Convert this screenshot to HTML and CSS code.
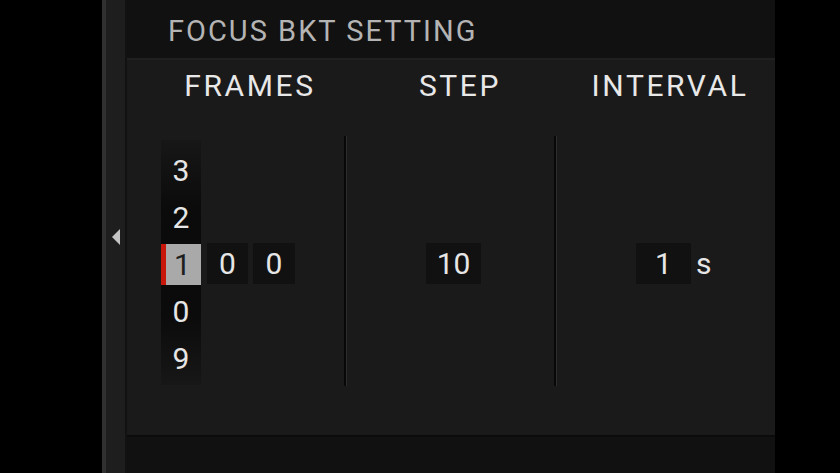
FILE: index.html
```html
<!DOCTYPE html>
<html>
<head>
<meta charset="utf-8">
<link rel="stylesheet" href="styles.css">
</head>
<body>
<div class="screen">
  <div class="gutter"></div>
  <div class="strip">
    <svg class="arrow" width="10" height="16" viewBox="0 0 10 16"><polygon points="9,0 9,16 1,8" fill="#c4c4c4"/></svg>
  </div>
  <div class="panel">
    <div class="head"><span class="title">FOCUS BKT SETTING</span></div>
    <div class="body">
      <div class="labels">
        <div class="label">FRAMES</div>
        <div class="label">STEP</div>
        <div class="label">INTERVAL</div>
      </div>
      <div class="content">
        <div class="col col-frames">
          <div class="wheel">
            <div class="wi">3</div>
            <div class="wi">2</div>
            <div class="wi"><span class="sel">1</span></div>
            <div class="wi">0</div>
            <div class="wi">9</div>
          </div>
          <div class="cell c1">0</div>
          <div class="cell c2">0</div>
        </div>
        <div class="divider"></div>
        <div class="col col-val">
          <div class="cell box">10</div>
        </div>
        <div class="divider"></div>
        <div class="col col-val">
          <div class="cell box">1</div>
          <span class="unit">s</span>
        </div>
      </div>
    </div>
    <div class="foot"></div>
  </div>
  <div class="gutter-r"></div>
</div>
</body>
</html>
```
FILE: styles.css
```css
html, body {
  margin: 0;
  padding: 0;
  background: #000;
}
.screen {
  display: flex;
  width: 840px;
  height: 473px;
  overflow: hidden;
  font-family: Roboto, "Liberation Sans", sans-serif;
  color: #e4e4e4;
}
.gutter { width: 102px; flex: none; background: #000; }
.gutter-r { flex: 1; background: #000; }
.strip {
  width: 19px;
  flex: none;
  background: #1e1e1e;
  border-left: 4px solid #303030;
  border-right: 2px solid #121212;
  display: flex;
  align-items: center;
  justify-content: center;
}
.arrow { display: block; margin-left: 1px; margin-top: 1px; }
.panel {
  width: 648px;
  flex: none;
  display: flex;
  flex-direction: column;
}
.head {
  height: 60px;
  box-sizing: border-box;
  padding: 17px 0 0 41px;
  background: #111;
  border-bottom: 2px solid #202020;
}
.title {
  display: block;
  font-size: 29px;
  line-height: 29px;
  letter-spacing: 2px;
  color: #b4b4b4;
}
.body {
  height: 377px;
  box-sizing: border-box;
  background: #1a1a1a;
  padding-top: 11px;
  border-bottom: 2px solid #0b0b0b;
}
.labels {
  display: flex;
  padding-left: 18px;
}
.label {
  width: 210px;
  text-align: center;
  font-size: 30px;
  line-height: 30px;
  letter-spacing: 2.6px;
  color: #e8e8e8;
}
.content {
  display: flex;
  height: 250px;
  margin-top: 35px;
}
.col {
  display: flex;
  align-items: flex-start;
}
.col-frames {
  width: 217px;
  padding-left: 34px;
  box-sizing: border-box;
}
.col-val {
  width: 207px;
  padding-left: 79px;
  box-sizing: border-box;
}
.col-val:last-child { width: 218px; }
.divider {
  width: 2px;
  flex: none;
  background: #080808;
  border-right: 1px solid #2c2c2c;
}
.wheel {
  width: 40px;
  height: 245px;
  margin-top: 4px;
  padding-top: 7px;
  box-sizing: border-box;
  background: linear-gradient(to bottom, #171717 0%, #0b0b0b 28%, #0a0a0a 50%, #0b0b0b 72%, #171717 100%);
}
.wi {
  height: 47px;
  display: flex;
  align-items: center;
  justify-content: center;
  font-size: 30px;
  line-height: 47px;
  color: #e6e6e6;
}
.sel {
  display: block;
  width: 100%;
  height: 41px;
  line-height: 41px;
  box-sizing: border-box;
  background: #a9a9a9;
  border-left: 5px solid #c8170a;
  color: #1e1e1e;
  text-align: center;
  padding-right: 2px;
}
.cell {
  height: 41px;
  margin-top: 107px;
  background: #111;
  font-size: 30px;
  line-height: 41px;
  text-align: center;
  color: #e6e6e6;
}
.c1 { width: 41px; margin-left: 6px; }
.c2 { width: 42px; margin-left: 5px; }
.box { width: 55px; }
.unit {
  margin-top: 107px;
  margin-left: 5px;
  font-size: 30px;
  line-height: 41px;
  color: #e6e6e6;
}
.foot {
  flex: 1;
  background: #111;
}
```
